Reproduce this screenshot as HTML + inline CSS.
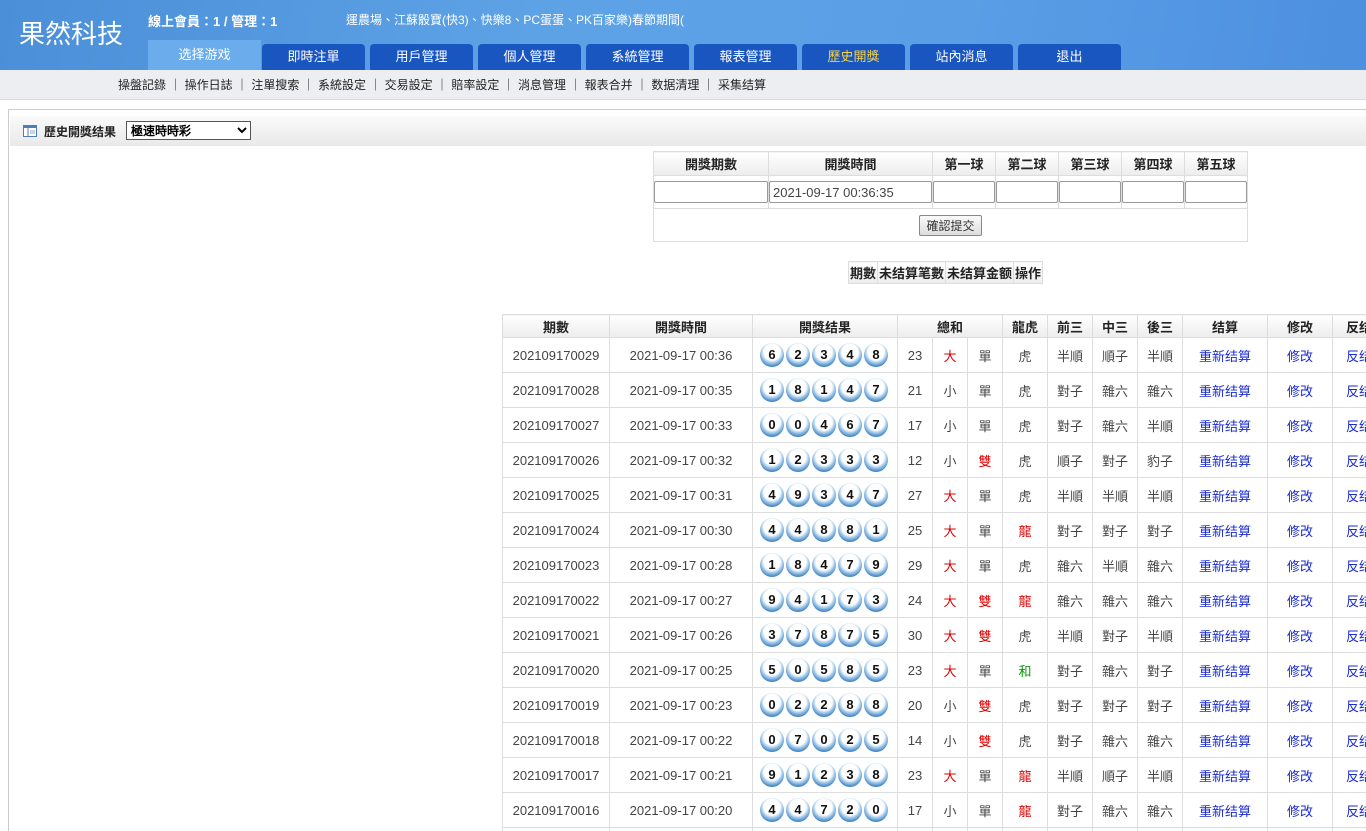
<!DOCTYPE html>
<html><head><meta charset="utf-8"><style>
*{box-sizing:border-box;margin:0;padding:0}
html,body{width:1366px;height:831px;overflow:hidden}
body{background:#fff;font-family:"Liberation Sans","Noto Sans CJK TC",sans-serif;font-size:12px;color:#333;position:relative}
.top{position:absolute;left:0;top:0;width:1366px;height:70px;background:linear-gradient(100deg,#4a8fd8 0%,#5ea2e6 40%,#5a9ee6 70%,#4d8fe0 100%)}
.logo{position:absolute;left:19px;top:14px;font-size:26px;color:#fff;font-family:"Noto Sans CJK TC",sans-serif}
.online{position:absolute;left:148px;top:11px;color:#fff;font-weight:bold;font-size:13px}
.marq{position:absolute;left:346px;top:11px;color:#fff;font-size:12px}
.tab{position:absolute;top:44px;height:26px;width:103px;background:#1a56c0;color:#fff;text-align:center;line-height:26px;font-size:13px;border-radius:4px 4px 0 0}
.tab.sel{background:#6aacec;top:40px;height:30px;line-height:30px;border-radius:0}
.sub{position:absolute;left:0;top:70px;width:1366px;height:30px;background:#eceef1;border-bottom:1px solid #d8dadd;line-height:30px;padding-left:118px;font-size:12px;color:#222}
.panel{position:absolute;left:8px;top:109px;width:1366px;height:730px;border:1px solid #ccc;border-right:none}
.ptitle{position:absolute;left:10px;top:116px;width:1356px;height:30px;background:linear-gradient(#fafafa,#e9e9e9);}
.ptitle b{position:absolute;left:34px;top:7px;font-size:12px;color:#222}
.ptitle select{position:absolute;left:116px;top:5px;width:125px;height:19px;font-size:12px;font-weight:bold;border:1px solid #555;background:#fff}
table{border-collapse:collapse;table-layout:fixed;position:absolute}
td,th{border:1px solid #ddd;text-align:center;white-space:nowrap;overflow:hidden}
th{background:linear-gradient(#fff,#ececec);font-size:13px;color:#222}
.f{left:653px;top:151px;width:594px}
.f th{height:24px}
.f td{height:33px}
.f input{height:22px;border:1px solid #999;border-radius:2px;width:100%;font-size:13px;padding-left:3px;color:#444}
.btn{font-size:12px;padding:1px 6px;border:1px solid #888;background:linear-gradient(#fafafa,#ddd);border-radius:2px;color:#333}
.s{left:848px;top:261px}
.s th{height:22px;padding:0 1px;font-size:13px}
.m{left:502px;top:314px;width:930px}
.m th{height:23px}
.m td{height:35px;font-size:13px;color:#444}
.m td.r{color:#d00}.m td.g{color:#090}.m td.a{color:#1a2bd0}
.m td:last-child{text-align:left;padding-left:13px}
.b{display:inline-block;font-style:normal;width:24px;height:24px;border-radius:50%;background:radial-gradient(circle at 50% 38%,#fff 0,#fff 42%,#a8cdec 55%,#2b74b8 80%,#1c5a98 100%);font-weight:bold;font-size:13px;color:#111;line-height:24px;margin-right:2px;vertical-align:middle}
</style></head><body>
<div class="top">
<div class="logo">果然科技</div>
<div class="online">線上會員：1 / 管理：1</div>
<div class="marq">運農場、江蘇骰寶(快3)、快樂8、PC蛋蛋、PK百家樂)春節期間(</div>
<div class="tab sel" style="left:148px;width:113px">选择游戏</div>
<div class="tab" style="left:262px">即時注單</div>
<div class="tab" style="left:370px">用戶管理</div>
<div class="tab" style="left:478px">個人管理</div>
<div class="tab" style="left:586px">系統管理</div>
<div class="tab" style="left:694px">報表管理</div>
<div class="tab" style="left:802px;color:#f5d24a">歷史開獎</div>
<div class="tab" style="left:910px">站內消息</div>
<div class="tab" style="left:1018px">退出</div>
</div>
<div class="sub">操盤記錄 ｜ 操作日誌 ｜ 注單搜索 ｜ 系統設定 ｜ 交易設定 ｜ 賠率設定 ｜ 消息管理 ｜ 報表合并 ｜ 数据清理 ｜ 采集结算</div>
<div class="panel"></div>
<div class="ptitle"><svg style="position:absolute;left:13px;top:9px" width="14" height="12"><rect x=".5" y=".5" width="13" height="11" fill="#fff" stroke="#4a7fb8"/><rect x="1" y="1" width="12" height="2" fill="#4a7fb8"/><line x1="5" y1="3" x2="5" y2="11" stroke="#4a7fb8"/><line x1="7" y1="6" x2="12" y2="6" stroke="#9ab"/><line x1="7" y1="8" x2="12" y2="8" stroke="#9ab"/></svg><b>歷史開獎结果</b><select><option>極速時時彩</option></select></div>

<table class="f"><colgroup><col width="115"><col width="164"><col width="63"><col width="63"><col width="63"><col width="63"><col width="63"></colgroup>
<tr><th>開獎期數</th><th>開獎時間</th><th>第一球</th><th>第二球</th><th>第三球</th><th>第四球</th><th>第五球</th></tr>
<tr><td><input></td><td><input value="2021-09-17 00:36:35"></td><td><input></td><td><input></td><td><input></td><td><input></td><td><input></td></tr>
<tr><td colspan="7"><button class="btn">確認提交</button></td></tr></table>

<table class="s"><tr><th>期數</th><th>未结算笔數</th><th>未结算金额</th><th>操作</th></tr></table>

<table class="m"><colgroup><col width="107"><col width="143"><col width="145"><col width="35"><col width="35"><col width="35"><col width="45"><col width="45"><col width="45"><col width="45"><col width="85"><col width="65"><col width="100"></colgroup>
<tr><th>期數</th><th>開獎時間</th><th>開獎结果</th><th colspan="3">總和</th><th>龍虎</th><th>前三</th><th>中三</th><th>後三</th><th>结算</th><th>修改</th><th style="text-align:left;padding-left:13px">反结</th></tr>
<tr><td>202109170029</td><td>2021-09-17 00:36</td><td><i class="b">6</i><i class="b">2</i><i class="b">3</i><i class="b">4</i><i class="b">8</i></td><td>23</td><td class="r">大</td><td>單</td><td>虎</td><td>半順</td><td>順子</td><td>半順</td><td class="a">重新结算</td><td class="a">修改</td><td class="a">反结</td></tr>
<tr><td>202109170028</td><td>2021-09-17 00:35</td><td><i class="b">1</i><i class="b">8</i><i class="b">1</i><i class="b">4</i><i class="b">7</i></td><td>21</td><td>小</td><td>單</td><td>虎</td><td>對子</td><td>雜六</td><td>雜六</td><td class="a">重新结算</td><td class="a">修改</td><td class="a">反结</td></tr>
<tr><td>202109170027</td><td>2021-09-17 00:33</td><td><i class="b">0</i><i class="b">0</i><i class="b">4</i><i class="b">6</i><i class="b">7</i></td><td>17</td><td>小</td><td>單</td><td>虎</td><td>對子</td><td>雜六</td><td>半順</td><td class="a">重新结算</td><td class="a">修改</td><td class="a">反结</td></tr>
<tr><td>202109170026</td><td>2021-09-17 00:32</td><td><i class="b">1</i><i class="b">2</i><i class="b">3</i><i class="b">3</i><i class="b">3</i></td><td>12</td><td>小</td><td class="r">雙</td><td>虎</td><td>順子</td><td>對子</td><td>豹子</td><td class="a">重新结算</td><td class="a">修改</td><td class="a">反结</td></tr>
<tr><td>202109170025</td><td>2021-09-17 00:31</td><td><i class="b">4</i><i class="b">9</i><i class="b">3</i><i class="b">4</i><i class="b">7</i></td><td>27</td><td class="r">大</td><td>單</td><td>虎</td><td>半順</td><td>半順</td><td>半順</td><td class="a">重新结算</td><td class="a">修改</td><td class="a">反结</td></tr>
<tr><td>202109170024</td><td>2021-09-17 00:30</td><td><i class="b">4</i><i class="b">4</i><i class="b">8</i><i class="b">8</i><i class="b">1</i></td><td>25</td><td class="r">大</td><td>單</td><td class="r">龍</td><td>對子</td><td>對子</td><td>對子</td><td class="a">重新结算</td><td class="a">修改</td><td class="a">反结</td></tr>
<tr><td>202109170023</td><td>2021-09-17 00:28</td><td><i class="b">1</i><i class="b">8</i><i class="b">4</i><i class="b">7</i><i class="b">9</i></td><td>29</td><td class="r">大</td><td>單</td><td>虎</td><td>雜六</td><td>半順</td><td>雜六</td><td class="a">重新结算</td><td class="a">修改</td><td class="a">反结</td></tr>
<tr><td>202109170022</td><td>2021-09-17 00:27</td><td><i class="b">9</i><i class="b">4</i><i class="b">1</i><i class="b">7</i><i class="b">3</i></td><td>24</td><td class="r">大</td><td class="r">雙</td><td class="r">龍</td><td>雜六</td><td>雜六</td><td>雜六</td><td class="a">重新结算</td><td class="a">修改</td><td class="a">反结</td></tr>
<tr><td>202109170021</td><td>2021-09-17 00:26</td><td><i class="b">3</i><i class="b">7</i><i class="b">8</i><i class="b">7</i><i class="b">5</i></td><td>30</td><td class="r">大</td><td class="r">雙</td><td>虎</td><td>半順</td><td>對子</td><td>半順</td><td class="a">重新结算</td><td class="a">修改</td><td class="a">反结</td></tr>
<tr><td>202109170020</td><td>2021-09-17 00:25</td><td><i class="b">5</i><i class="b">0</i><i class="b">5</i><i class="b">8</i><i class="b">5</i></td><td>23</td><td class="r">大</td><td>單</td><td class="g">和</td><td>對子</td><td>雜六</td><td>對子</td><td class="a">重新结算</td><td class="a">修改</td><td class="a">反结</td></tr>
<tr><td>202109170019</td><td>2021-09-17 00:23</td><td><i class="b">0</i><i class="b">2</i><i class="b">2</i><i class="b">8</i><i class="b">8</i></td><td>20</td><td>小</td><td class="r">雙</td><td>虎</td><td>對子</td><td>對子</td><td>對子</td><td class="a">重新结算</td><td class="a">修改</td><td class="a">反结</td></tr>
<tr><td>202109170018</td><td>2021-09-17 00:22</td><td><i class="b">0</i><i class="b">7</i><i class="b">0</i><i class="b">2</i><i class="b">5</i></td><td>14</td><td>小</td><td class="r">雙</td><td>虎</td><td>對子</td><td>雜六</td><td>雜六</td><td class="a">重新结算</td><td class="a">修改</td><td class="a">反结</td></tr>
<tr><td>202109170017</td><td>2021-09-17 00:21</td><td><i class="b">9</i><i class="b">1</i><i class="b">2</i><i class="b">3</i><i class="b">8</i></td><td>23</td><td class="r">大</td><td>單</td><td class="r">龍</td><td>半順</td><td>順子</td><td>半順</td><td class="a">重新结算</td><td class="a">修改</td><td class="a">反结</td></tr>
<tr><td>202109170016</td><td>2021-09-17 00:20</td><td><i class="b">4</i><i class="b">4</i><i class="b">7</i><i class="b">2</i><i class="b">0</i></td><td>17</td><td>小</td><td>單</td><td class="r">龍</td><td>對子</td><td>雜六</td><td>雜六</td><td class="a">重新结算</td><td class="a">修改</td><td class="a">反结</td></tr>
<tr><td>202109170015</td><td>2021-09-17 00:19</td><td><i class="b">1</i><i class="b">2</i><i class="b">3</i><i class="b">4</i><i class="b">5</i></td><td>15</td><td>小</td><td>單</td><td>虎</td><td>順子</td><td>順子</td><td>順子</td><td class="a">重新结算</td><td class="a">修改</td><td class="a">反结</td></tr>
</table>
</body></html>
